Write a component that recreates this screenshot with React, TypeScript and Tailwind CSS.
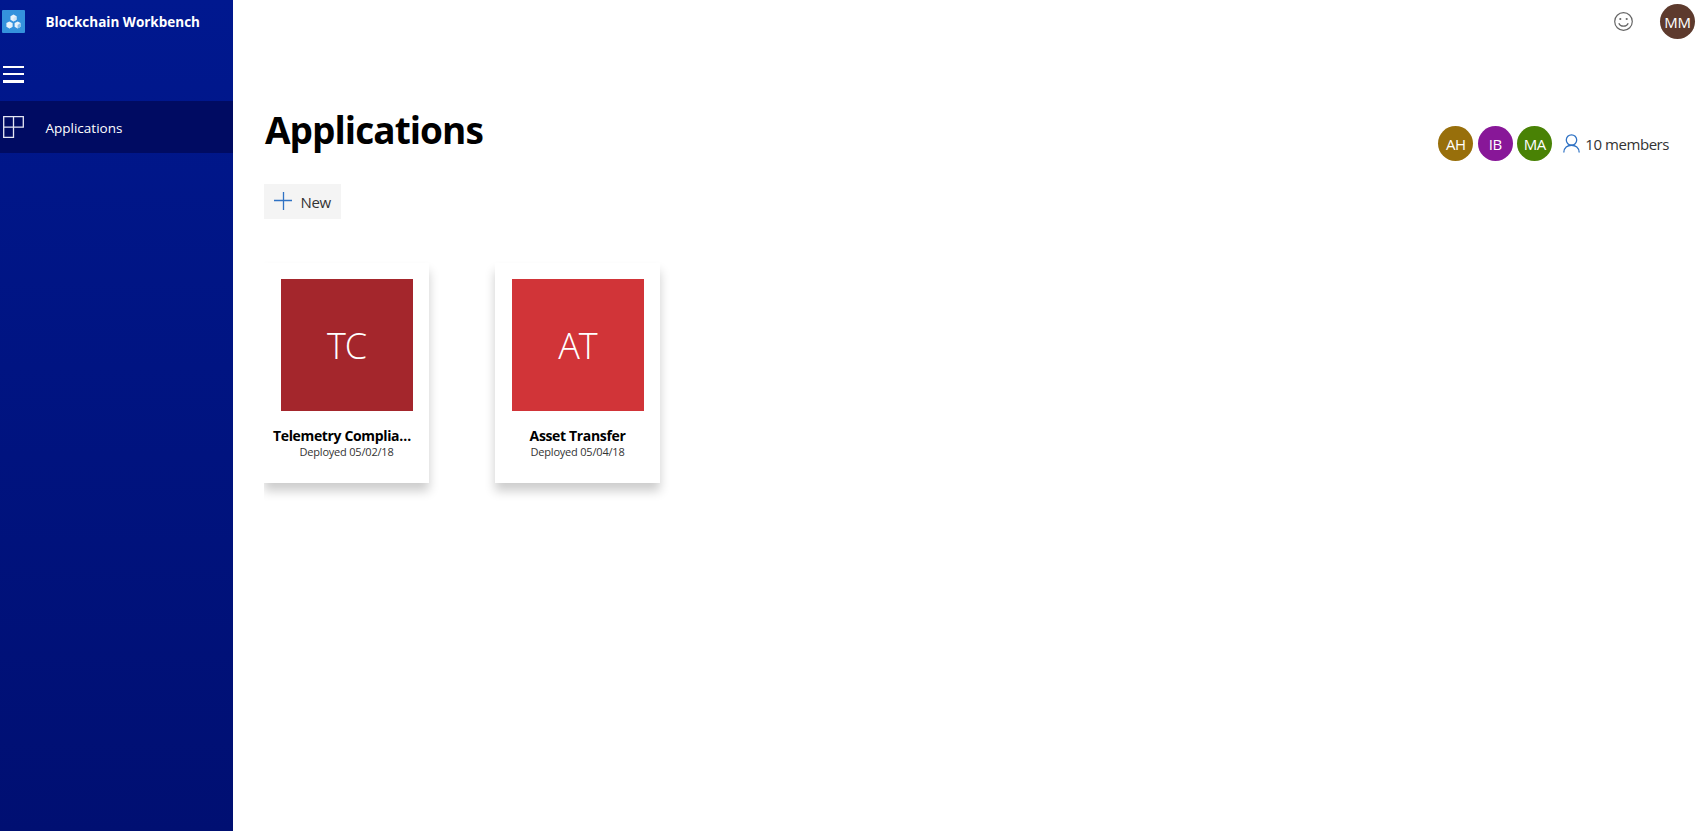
function Logo() {
  const cubes = [
    { x: 11.5, y: 8, right: "#cfe4f6" },
    { x: 7.4, y: 14.9, right: "#e3f0fa" },
    { x: 15.6, y: 14.9, right: "#86bdea" },
  ];
  return (
    <svg width="23" height="23" viewBox="0 0 23 23">
      <rect width="23" height="23" rx="1" fill="#3492dd" />
      {cubes.map((c) => (
        <g key={c.x} transform={`translate(${c.x} ${c.y})`}>
          <path d="M0-3.5 3-1.8V1.8L0 3.5-3 1.8V-1.8Z" fill="#e9f3fb" />
          <path d="M0 0 3-1.8V1.8L0 3.5Z" fill={c.right} />
        </g>
      ))}
    </svg>
  );
}

function Avatar({ initials, color }: { initials: string; color: string }) {
  return (
    <div className={`flex size-[35px] items-center justify-center rounded-full text-[15px] leading-5 tracking-[-0.3px] text-white ${color}`}>
      {initials}
    </div>
  );
}

interface AppCardProps {
  initials: string;
  name: string;
  date: string;
  color: string;
  namePadding: string;
}

function AppCard({ initials, name, date, color, namePadding }: AppCardProps) {
  return (
    <div className="flex h-[220px] w-[165px] flex-col items-center bg-white pt-4 shadow-[0_8px_10px_rgba(0,0,0,0.2)]">
      <div className={`flex size-[132px] items-center justify-center pt-px text-[36px] font-light tracking-[-1px] text-white ${color}`}>
        {initials}
      </div>
      <div className={`mt-4 h-[18px] w-full truncate text-center text-[14px] leading-[18px] font-bold tracking-[-0.35px] text-black ${namePadding}`}>{name}</div>
      <div className="-mt-px text-[11px] leading-[15px] tracking-[-0.2px] text-[#333]">{date}</div>
    </div>
  );
}

export default function App() {
  return (
    <div className="flex h-[831px] w-full overflow-hidden bg-white font-['Open_Sans','Noto_Sans',sans-serif]">
      <aside className="flex w-[233px] shrink-0 flex-col bg-linear-to-b from-[#00188f] to-[#000f72] text-white">
        <div className="flex h-11 items-start pt-2.5 pl-0.5">
          <Logo />
          <span className="ml-[20.5px] text-[13.5px] leading-6 font-bold">Blockchain Workbench</span>
        </div>
        <div className="flex h-[57px] items-start pt-[22px] pl-[3px]">
          <svg width="21" height="17" viewBox="0 0 21 17" fill="#fff">
            <path d="M0 0h21v2H0zM0 7h21v2H0zM0 14h21v3H0z" />
          </svg>
        </div>
        <div className="flex h-[52px] items-center bg-[#000b62] pl-[3px]">
          <svg width="21" height="22" viewBox="0 0 21 22" fill="none" stroke="#e4e6f3" strokeWidth="1.3">
            <path d="M.7.7h19.6v10.4H.7zM10.5.7v20.6H.7V.7" />
          </svg>
          <span className="ml-[21.5px] pt-0.5 text-[13.5px]">Applications</span>
        </div>
      </aside>

      <div className="flex min-w-0 grow flex-col">
        <header className="flex h-11 items-start justify-end pt-1 pr-2">
          <svg className="mt-2 mr-[27px]" width="19" height="19" viewBox="0 0 19 19" fill="none" stroke="#666" strokeWidth="1.2">
            <circle cx="9.5" cy="9.5" r="8.8" />
            <path d="M4.8 11.2c1.6 4 7.8 4 9.4 0" />
            <circle cx="6.3" cy="7" r="1.1" fill="#666" stroke="none" />
            <circle cx="12.7" cy="7" r="1.1" fill="#666" stroke="none" />
          </svg>
          <Avatar initials="MM" color="bg-[#5d3a2d]" />
        </header>

        <main className="flex flex-col pl-[31px]">
          <div className="flex h-[140px] justify-between pr-[34px]">
            <h1 className="mt-[61px] h-[50px] pl-px text-[37px] leading-[50px] font-bold tracking-[-0.95px] text-black">Applications</h1>
            <div className="mt-[82px] flex h-[35px] items-center">
              <div className="flex gap-[4.5px]">
                <Avatar initials="AH" color="bg-[#986f0b]" />
                <Avatar initials="IB" color="bg-[#881798]" />
                <Avatar initials="MA" color="bg-[#498205]" />
              </div>
              <svg className="-mt-px ml-[11px]" width="17" height="19" viewBox="0 0 17 19" fill="none" stroke="#2f72c4" strokeWidth="1.3">
                <circle cx="8.5" cy="6" r="5.2" />
                <path d="M.8 18.5c0-9.7 15.4-9.7 15.4 0" />
              </svg>
              <span className="relative top-px ml-[5px] text-[15px] tracking-[-0.45px] text-[#333]">10 members</span>
            </div>
          </div>

          <button className="flex h-[35px] w-[77px] items-center bg-[#f4f4f4] pl-2.5 text-[15px] text-[#333]">
            <svg className="-mt-px" width="18" height="18" viewBox="0 0 18 18" stroke="#2f72c4" strokeWidth="1.3">
              <path d="M9.5 0v18M0 8.5h18" />
            </svg>
            <span className="relative top-px ml-[8.5px] tracking-[-0.3px]">New</span>
          </button>

          <div className="mt-[24px] flex gap-[66px] overflow-hidden pt-5 pb-8">
            <AppCard initials="TC" name="Telemetry Compliance" date="Deployed 05/02/18" color="bg-[#a4262c]" namePadding="pl-[9px] pr-4" />
            <AppCard initials="AT" name="Asset Transfer" date="Deployed 05/04/18" color="bg-[#d13438]" namePadding="px-2" />
          </div>
        </main>
      </div>
    </div>
  );
}
